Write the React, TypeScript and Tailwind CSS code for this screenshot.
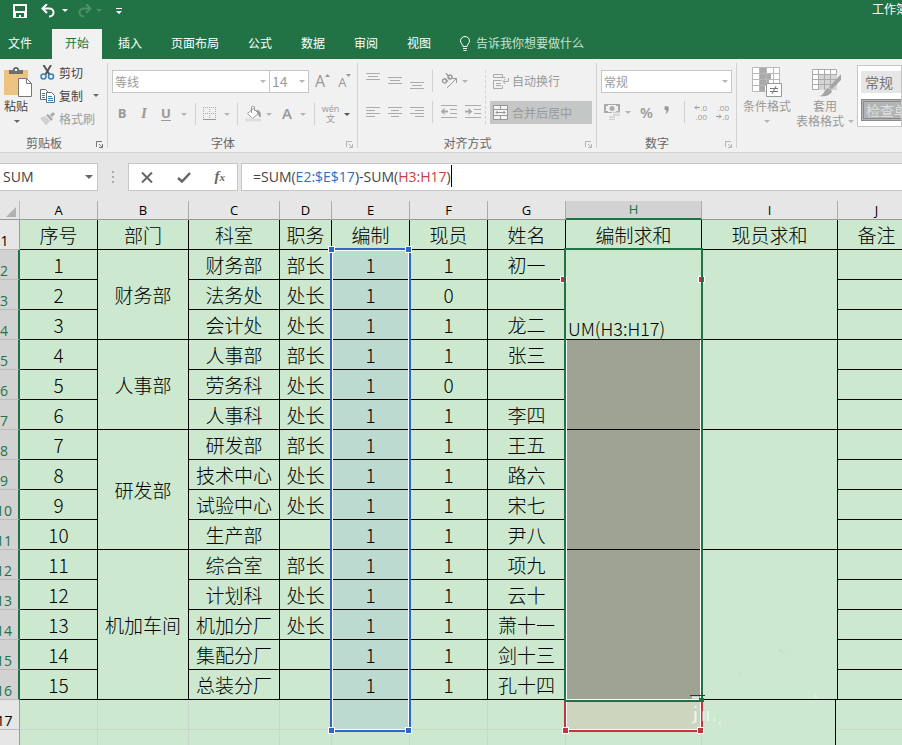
import { ReactNode } from 'react';

type SheetRow = {
  dept?: string;
  span?: number;
  office: string;
  title: string;
  quota: string;
  staff: string;
  name: string;
};

const ROWS: SheetRow[] = [
  { dept: '财务部', span: 3, office: '财务部', title: '部长', quota: '1', staff: '1', name: '初一' },
  { office: '法务处', title: '处长', quota: '1', staff: '0', name: '' },
  { office: '会计处', title: '处长', quota: '1', staff: '1', name: '龙二' },
  { dept: '人事部', span: 3, office: '人事部', title: '部长', quota: '1', staff: '1', name: '张三' },
  { office: '劳务科', title: '处长', quota: '1', staff: '0', name: '' },
  { office: '人事科', title: '处长', quota: '1', staff: '1', name: '李四' },
  { dept: '研发部', span: 4, office: '研发部', title: '部长', quota: '1', staff: '1', name: '王五' },
  { office: '技术中心', title: '处长', quota: '1', staff: '1', name: '路六' },
  { office: '试验中心', title: '处长', quota: '1', staff: '1', name: '宋七' },
  { office: '生产部', title: '', quota: '1', staff: '1', name: '尹八' },
  { dept: '机加车间', span: 5, office: '综合室', title: '部长', quota: '1', staff: '1', name: '项九' },
  { office: '计划科', title: '处长', quota: '1', staff: '1', name: '云十' },
  { office: '机加分厂', title: '处长', quota: '1', staff: '1', name: '萧十一' },
  { office: '集配分厂', title: '', quota: '1', staff: '1', name: '剑十三' },
  { office: '总装分厂', title: '', quota: '1', staff: '1', name: '孔十四' },
];

const COLUMNS = ['A', 'B', 'C', 'D', 'E', 'F', 'G', 'H', 'I', 'J'];
const HEADINGS = ['序号', '部门', '科室', '职务', '编制', '现员', '姓名', '编制求和', '现员求和', '备注'];
const TABS = ['插入', '页面布局', '公式', '数据', '审阅', '视图'];

const Arrow = ({ className = 'text-[#b5b5b5]' }: { className?: string }) => (
  <svg width="6" height="3" viewBox="0 0 6 3" className={`shrink-0 ${className}`} aria-hidden="true">
    <path d="M0 0h6L3 3z" fill="currentColor" />
  </svg>
);

const Divider = ({ className = 'h-[22px]' }: { className?: string }) => (
  <div className={`w-px shrink-0 bg-[#d2d2d2] ${className}`} />
);

const Launcher = ({ className = 'text-[#b5b5b5]' }: { className?: string }) => (
  <button aria-label="更多设置" className={`absolute right-[5px] bottom-1 ${className}`}>
    <svg width="7" height="7" viewBox="0 0 7 7" fill="none" stroke="currentColor">
      <path d="M.5 6V.5H6M3 3l3 3M6.500 3v3.500H3" />
    </svg>
  </button>
);

const Group = ({
  label,
  className,
  launcher,
  children,
}: {
  label: string;
  className: string;
  launcher?: string;
  children: ReactNode;
}) => (
  <section className={`relative flex shrink-0 flex-col ${className}`}>
    <div className="flex-1">{children}</div>
    <h2 className="h-[18px] pr-5 text-center leading-[17px] text-[#666]">{label}</h2>
    <Launcher className={launcher} />
    <div className="absolute top-1 right-0 bottom-1 w-px bg-[#d2d2d2]" />
  </section>
);

const Combo = ({ label, value, className }: { label: string; value: string; className: string }) => (
  <div className={`relative h-[23px] shrink-0 ${className}`}>
    <select
      aria-label={label}
      className="size-full appearance-none border border-[#c6c6c6] bg-white px-[2px] text-[#9c9c9c] outline-none"
    >
      <option>{value}</option>
    </select>
    <Arrow className="pointer-events-none absolute top-[10px] right-1 text-[#b5b5b5]" />
  </div>
);

const LINES: Record<string, number[][]> = {
  top: [[0, 14, 0], [2, 12, 3], [0, 14, 6]],
  middle: [[0, 14, 4], [2, 12, 7], [0, 14, 10]],
  bottom: [[0, 14, 9], [2, 12, 12], [0, 14, 15]],
  left: [[0, 14, 3], [0, 9, 6], [0, 14, 9], [0, 9, 12]],
  center: [[0, 14, 3], [3, 11, 6], [0, 14, 9], [3, 11, 12]],
  right: [[0, 14, 3], [5, 14, 6], [0, 14, 9], [5, 14, 12]],
};

const AlignButton = ({ kind, label }: { kind: string; label: string }) => (
  <button aria-label={label}>
    <svg width="14" height="16" viewBox="0 0 14 16" stroke="#ababab">
      {LINES[kind].map(([from, to, y]) => (
        <path key={y} d={`M${from} ${y + 0.5}H${to}`} />
      ))}
    </svg>
  </button>
);

const IndentButton = ({ label, flip }: { label: string; flip?: boolean }) => (
  <button aria-label={label}>
    <svg width="16" height="14" viewBox="0 0 16 14" stroke="#ababab">
      <path d="M0 .5h16M9 4.500h7M9 8.500h7M0 12.500h16" />
      <path d={flip ? 'M0 6.500h5' : 'M7 6.500H2'} strokeWidth="2" />
      <path d={flip ? 'M3.500 3v7l4-3.500z' : 'M3.500 3v7l-4-3.500z'} fill="#ababab" stroke="none" />
    </svg>
  </button>
);

const Header = () => (
  <header className="shrink-0 overflow-hidden bg-[#217346] text-white">
    <div className="flex h-[29px] items-start pt-1 pl-[13px]">
      <button aria-label="保存">
        <svg width="14" height="14" viewBox="0 0 14 14">
          <path d="M0 0h14v14H0z" fill="#fff" />
          <path d="M2 2h10v5H2zM3 9h8v4H8v-2H6v2H3z" fill="#217346" />
        </svg>
      </button>
      <button aria-label="撤消" className="ml-[14px]">
        <svg width="15" height="14" viewBox="0 0 15 14" fill="none" stroke="#fff" strokeWidth="2">
          <path d="M6 0L1.500 4.500 6 9M2 4.500h6.500a4 4 0 0 1 0 8H8" />
        </svg>
      </button>
      <Arrow className="mt-[5px] ml-[6px] text-white" />
      <button aria-label="恢复" className="ml-[9px]">
        <svg width="15" height="14" viewBox="0 0 15 14" fill="none" stroke="#4c9069" strokeWidth="2">
          <path d="M9 0l4.500 4.500L9 9M13 4.500H6.500a4 4 0 0 0 0 8H7" />
        </svg>
      </button>
      <Arrow className="mt-[5px] ml-1 text-[#4c9069]" />
      <button aria-label="自定义快速访问工具栏" className="mt-1 ml-[14px]">
        <svg width="6" height="6" viewBox="0 0 6 6" fill="#fff">
          <path d="M0 0h6v1H0zM0 3h6L3 6z" />
        </svg>
      </button>
      <h1 className="-mt-1 ml-auto w-[30px] overflow-hidden whitespace-nowrap">工作簿1 - Excel</h1>
    </div>
    <nav className="flex h-[30px] items-stretch">
      <button className="w-[52px] pr-3 pb-[2px]">文件</button>
      <button className="bg-[#f1f1f1] px-[13px] pb-[2px] text-[#217346]">开始</button>
      {TABS.map((tab) => (
        <button key={tab} className="ml-[3px] px-[13px] pb-[2px] whitespace-nowrap">
          {tab}
        </button>
      ))}
      <button className="ml-4 flex items-center gap-[6px] pb-[2px] whitespace-nowrap text-[#c9e2d3]">
        <svg width="10" height="15" viewBox="0 0 10 15" fill="none" stroke="#fff">
          <path d="M3 10.500C3 8.500.500 7.500.500 4.800a4.500 4.300 0 0 1 9 0C9.500 7.500 7 8.500 7 10.500zM3 12.500h4M3.500 14.500h3" />
        </svg>
        告诉我你想要做什么
      </button>
    </nav>
  </header>
);

const ClipboardGroup = () => (
  <Group label="剪贴板" className="w-[108px]" launcher="text-[#777]">
    <div className="flex">
      <button className="mt-2 flex w-8 flex-col items-center pl-1">
        <svg width="28" height="30" viewBox="0 0 28 30">
          <path d="M0 3h24v25H0z" fill="#eec382" />
          <path d="M5 7V3h4V1.500L11 0h2l2 1.500V3h4v4z" fill="#6f6f6f" />
          <path d="M11 2h2v2h-2z" fill="#fff" />
          <path d="M14.500 11.500h8l5 5v13h-13z" fill="#fff" stroke="#777" />
          <path d="M22.500 11.500v5h5" fill="none" stroke="#777" />
        </svg>
        <span className="pr-1 leading-[17px] text-[#444]">粘贴</span>
        <Arrow className="mt-[6px] mr-[2px] text-[#666]" />
      </button>
      <div className="mt-[2px] ml-2 flex flex-col text-[#444]">
        <button className="flex h-[23px] items-center gap-1">
          <svg width="15" height="15" viewBox="0 0 15 15" fill="none">
            <path d="M3.500 0l6 9.500M11 0L5.500 9.500" stroke="#555" strokeWidth="2" />
            <circle cx="3.500" cy="11.500" r="2.500" stroke="#2e83bd" strokeWidth="1.500" />
            <circle cx="11" cy="11.500" r="2.500" stroke="#2e83bd" strokeWidth="1.500" />
          </svg>
          剪切
        </button>
        <button className="flex h-[23px] items-center gap-1">
          <svg width="15" height="14" viewBox="0 0 15 14" fill="#fff" stroke="#6a6a6a">
            <path d="M.5.5h5l2 2v8h-7z" />
            <path d="M2 4.500h3M2 6.500h3M2 8.500h3" stroke="#2e83bd" />
            <path d="M6.500 3.500h5l3 3v7h-8z" />
            <path d="M8 7.500h4M8 9.500h5M8 11.500h5" stroke="#2e83bd" />
          </svg>
          复制
          <Arrow className="ml-[6px] text-[#666]" />
        </button>
        <button className="flex h-[23px] items-center gap-1 text-[#9c9c9c]">
          <svg width="15" height="14" viewBox="0 0 15 14">
            <path d="M0 6l5-2 5 5-4 4.500z" fill="#cfcfcf" />
            <path d="M6 3l2-1 5 5-2 2zM10 3l3-3 2 2-3 3z" fill="#aaa" />
          </svg>
          格式刷
        </button>
      </div>
    </div>
  </Group>
);

const FontGroup = () => (
  <Group label="字体" className="w-[250px]">
    <div className="flex pt-[11px] pl-1">
      <Combo label="字体" value="等线" className="w-[158px]" />
      <Combo label="字号" value="14" className="-ml-px w-10 text-[14px]" />
      <button aria-label="增大字号" className="ml-[6px] flex font-['Open_Sans',sans-serif] text-[16px] leading-[23px] text-[#999]">
        A
        <svg width="5" height="3" viewBox="0 0 5 3" className="mt-1" fill="#999">
          <path d="M0 3h5L2.500 0z" />
        </svg>
      </button>
      <button aria-label="减小字号" className="ml-2 flex font-['Open_Sans',sans-serif] text-[13px] leading-[25px] text-[#999]">
        A
        <svg width="5" height="3" viewBox="0 0 5 3" className="mt-1" fill="#999">
          <path d="M0 0h5L2.500 3z" />
        </svg>
      </button>
    </div>
    <div className="mt-2 flex h-[22px] items-center pl-1 font-['Open_Sans',sans-serif] text-[13px] leading-[18px] text-[#999]">
      <button aria-label="加粗" className="w-5 pb-[2px] text-center font-bold">B</button>
      <button aria-label="倾斜" className="ml-[2px] w-5 pb-[2px] text-center font-['Liberation_Serif',serif] text-[15px] font-bold italic">I</button>
      <button aria-label="下划线" className="ml-[2px] w-5 pb-[2px] text-center font-bold underline underline-offset-2">U</button>
      <Arrow className="ml-[5px] text-[#b5b5b5]" />
      <Divider className="ml-[8px] h-[22px]" />
      <button aria-label="边框" className="ml-[7px]">
        <svg width="13" height="14" viewBox="0 0 13 14" fill="none" stroke="#aaa">
          <path d="M0 .5h13M0 6.500h13M.5 0v12M6.500 0v12M12.500 0v12" strokeDasharray="1 1" />
          <path d="M0 12.500h13" stroke="#999" />
        </svg>
      </button>
      <Arrow className="ml-[8px] text-[#b5b5b5]" />
      <Divider className="ml-[7px] h-[22px]" />
      <button aria-label="填充颜色" className="ml-[7px]">
        <svg width="17" height="16" viewBox="0 0 17 16" fill="none" stroke="#999">
          <path d="M2.500 7.500l6-5 5 5-6 5z" fill="#fff" />
          <path d="M6.500 7V1.500a1.500 1.500 0 0 1 3 0V5" />
          <path d="M12 4c3 1 4 4 3 7-1-1-1-3-2.500-4z" fill="#999" />
          <path d="M0 14h16" strokeWidth="3" stroke="#dedede" />
        </svg>
      </button>
      <Arrow className="ml-[4px] text-[#b5b5b5]" />
      <button aria-label="字体颜色" className="ml-[9px] w-[12px] pb-[2px] text-[15px] font-semibold">A</button>
      <Arrow className="ml-[7px] text-[#b5b5b5]" />
      <Divider className="ml-[8px] h-[22px]" />
      <button aria-label="拼音指南" className="ml-[6px] flex w-[19px] flex-col items-center font-['Open_Sans','Noto_Sans_CJK_SC',sans-serif] text-[9px] leading-[10px]">
        <span>wén</span>
        <span>文</span>
      </button>
      <Arrow className="ml-[4px] text-[#555]" />
    </div>
  </Group>
);

const AlignGroup = () => (
  <Group label="对齐方式" className="w-[239px]">
    <div className="flex pt-[11px] pl-2">
      <div>
        <div className="flex h-[22px] items-center gap-2">
          <AlignButton kind="top" label="顶端对齐" />
          <AlignButton kind="middle" label="垂直居中" />
          <AlignButton kind="bottom" label="底端对齐" />
          <Divider />
          <button aria-label="方向" className="flex items-center gap-1">
            <svg width="17" height="16" viewBox="0 0 17 16" fill="none" stroke="#999">
              <g strokeWidth="1.300">
                <circle cx="3.500" cy="8" r="2" />
                <path d="M4 5.500l3 3" />
                <circle cx="9" cy="4" r="2" />
                <path d="M5 0l3.500 5" />
              </g>
              <path d="M6 15l9-9M11 5.500h4.500V10" />
            </svg>
            <Arrow />
          </button>
        </div>
        <div className="mt-[9px] flex h-[22px] items-center gap-2">
          <AlignButton kind="left" label="左对齐" />
          <AlignButton kind="center" label="居中" />
          <AlignButton kind="right" label="右对齐" />
          <Divider />
          <IndentButton label="减少缩进量" />
          <IndentButton label="增加缩进量" flip />
        </div>
      </div>
      <div className="ml-1 h-[54px] border-l border-dashed border-[#d2d2d2]" />
      <div className="ml-1 text-[#999]">
        <button className="flex h-[22px] items-center gap-[3px] pl-[3px]">
          <svg width="16" height="16" viewBox="0 0 16 16" fill="none" stroke="#aaa">
            <path d="M.5 1.500h9v3h-9zM.5 15.500v-8h8M3 10.500h5M3 12.500h5M.5 15.500h9v-3M9.500 4.500h3M15.500 5v3.500h-5M12.500 6l-2.500 2.500 2.500 2.500" />
          </svg>
          自动换行
        </button>
        <button className="mt-[9px] flex h-[23px] w-[102px] items-center gap-[4px] bg-[#c5c7c6] pl-[3px]">
          <svg width="15" height="15" viewBox="0 0 15 15" stroke="#969696">
            <path d="M.5.5h14v14H.5z" fill="#f4f4f4" />
            <path d="M0 4.500h15M0 10.500h15M7.500 0v4.500M7.500 10.500V15M3 7.500h9M4.500 6L3 7.500 4.500 9M10.500 6L12 7.500 10.500 9" fill="none" />
          </svg>
          合并后居中
        </button>
      </div>
    </div>
  </Group>
);

const NumberGroup = () => (
  <Group label="数字" className="w-[140px]">
    <div className="pt-[11px] pl-1">
      <Combo label="数字格式" value="常规" className="w-[131px]" />
    </div>
    <div className="mt-2 flex h-[22px] items-center pl-[7px] font-['Open_Sans',sans-serif] text-[#999]">
      <button aria-label="会计数字格式">
        <svg width="16" height="16" viewBox="0 0 16 16">
          <path d="M.5.5h15v8H.5z" fill="#f1f1f1" stroke="#aaa" />
          <path d="M0 0h4v2H2v5h2v2H0zM16 0h-4v2h2v5h-2v2h4z" fill="#aaa" />
          <circle cx="8" cy="4.500" r="2.500" fill="#aaa" />
          <path d="M8 8h8v2H8z" fill="#f1f1f1" />
          <path d="M9 8.500h7M9 11h7M5 13h6M5 15.500h6" stroke="#cfcfcf" strokeWidth="1.500" />
        </svg>
      </button>
      <Arrow className="ml-[5px] text-[#b5b5b5]" />
      <button aria-label="百分比样式" className="ml-[8px] w-[15px] text-[15px] font-semibold">%</button>
      <button aria-label="千位分隔样式" className="ml-[10px] w-[7px] pb-1">
        <svg width="6" height="8" viewBox="0 0 6 9" fill="#999">
          <path d="M0 2.500a2.500 2.500 0 0 1 5 0C5 5.500 4 8 1 9c1-1.500 1.500-2.500 1.500-4A2.500 2.500 0 0 1 0 2.500z" />
        </svg>
      </button>
      <Divider className="ml-[13px] h-[22px]" />
      <button aria-label="增加小数位数" className="ml-[7px] flex w-[15px] flex-col items-end text-[8px] leading-[9px]">
        <span className="flex items-center">
          <svg width="6" height="5" viewBox="0 0 6 5" fill="none" stroke="#999">
            <path d="M6 2.500H1M3 .5l-2 2 2 2" />
          </svg>
          .0
        </span>
        <span>.00</span>
      </button>
      <button aria-label="减少小数位数" className="ml-[7px] flex w-[15px] flex-col items-end text-[8px] leading-[9px]">
        <span>.00</span>
        <span className="flex items-center">
          <svg width="6" height="5" viewBox="0 0 6 5" fill="none" stroke="#999">
            <path d="M0 2.500h5M3 .5l2 2-2 2" />
          </svg>
          .0
        </span>
      </button>
    </div>
  </Group>
);

const StylesGroup = () => (
  <section className="flex min-w-0 flex-1 overflow-hidden text-[#999]">
    <button className="mt-2 ml-[6px] flex shrink-0 flex-col items-center self-start">
      <svg width="30" height="30" viewBox="0 0 30 30">
        <path d="M0 0h28v25H0z" fill="#fff" />
        <path d="M8 0h6v6H8zM8 6h11v6H8zM8 12h9v6H8zM8 18h5v7H8z" fill="#aaa" />
        <path d="M.5.5h27v24H.5zM0 6.500h28M0 12.500h28M0 18.500h28M7.500 0v25M14.500 0v25M21.500 0v25" fill="none" stroke="#b8b8b8" />
        <path d="M14.500 16.500h15v13h-15z" fill="#fff" stroke="#999" />
        <path d="M18 21.500h8M18 24.500h8M24 19l-4 8" stroke="#777" />
      </svg>
      <span className="leading-[17px]">条件格式</span>
      <Arrow className="mt-[6px] text-[#b5b5b5]" />
    </button>
    <button className="mt-[10px] ml-[5px] shrink-0 self-start">
      <svg width="30" height="28" viewBox="0 0 30 28" className="ml-4">
        <path d="M.5.5h24v20H.5z" fill="#fff" stroke="#aaa" />
        <path d="M7 6h18v15H7z" fill="#d5d5d5" />
        <path d="M0 5.500h25M0 10.500h25M0 15.500h25M6.500 0v21M12.500 0v21M18.500 0v21" stroke="#aaa" />
        <path d="M29 5v6l-9 9-3-2z" fill="#a5a5a5" />
        <path d="M7 27c5 0 5-7 9-8l4 3c-1 4-6 6-13 5z" fill="#a5a5a5" />
      </svg>
      <span className="block leading-[17px]">套用</span>
      <span className="flex items-center gap-1 leading-[14px]">
        表格格式
        <Arrow />
      </span>
    </button>
    <div className="mt-[6px] ml-[3px] h-[62px] flex-1 overflow-hidden border border-[#c6c6c6] bg-white py-[5px] pl-[3px] text-[14px] whitespace-nowrap">
      <button className="block h-[22px] w-[92px] bg-[#e6e6e6] pl-1 text-left leading-[20px] text-[#777]">常规</button>
      <button className="mt-[6px] block h-[22px] w-[92px] border-3 border-double border-[#8a8a8a] bg-[#b4b4b4] pl-[2px] text-left leading-[14px] text-[#dedede]">
        检查单元格
      </button>
    </div>
  </section>
);

const FormulaBar = () => (
  <div className="flex h-12 shrink-0 items-center font-['Open_Sans','Noto_Sans_CJK_SC',sans-serif] text-[14px] text-[#444]">
    <div className="relative h-7 w-[98px] shrink-0 border border-l-0 border-[#c6c6c6] bg-white">
      <input aria-label="名称框" defaultValue="SUM" className="size-full pb-[2px] pl-[3px] outline-none" />
      <svg width="8" height="4" viewBox="0 0 8 4" className="pointer-events-none absolute top-[11px] right-1" fill="#666">
        <path d="M0 0h8L4 4z" />
      </svg>
    </div>
    <svg width="2" height="12" viewBox="0 0 2 12" className="mx-[14px] shrink-0" fill="#aaa">
      <path d="M0 0h2v2H0zM0 5h2v2H0zM0 10h2v2H0z" />
    </svg>
    <div className="flex h-7 w-[110px] shrink-0 items-center justify-between border border-[#c6c6c6] bg-white px-3">
      <button aria-label="取消">
        <svg width="12" height="11" viewBox="0 0 12 11" stroke="#666" strokeWidth="2">
          <path d="M1 .5l10 10M11 .5l-10 10" />
        </svg>
      </button>
      <button aria-label="输入">
        <svg width="14" height="11" viewBox="0 0 14 11" fill="none" stroke="#666" strokeWidth="2.500">
          <path d="M1 6l4 3.500L13 1" />
        </svg>
      </button>
      <button aria-label="插入函数" className="pb-[2px] font-['Liberation_Serif',serif] text-[15px] font-bold italic text-[#666]">
        f<span className="text-[11px]">x</span>
      </button>
    </div>
    <div className="relative ml-[3px] h-7 min-w-0 flex-1 border border-r-0 border-[#c6c6c6] bg-white">
      <div className="pointer-events-none absolute inset-0 flex items-center pb-[2px] pl-[11px] whitespace-pre" aria-hidden="true">
        =SUM(<span className="text-[#2f6fc0]">E2:$E$17</span>)-SUM(<span className="text-[#c5413f]">H3:H17</span>)
        <span className="h-[22px] w-px bg-black" />
      </div>
      <input
        aria-label="编辑栏"
        defaultValue="=SUM(E2:$E$17)-SUM(H3:H17)"
        className="size-full bg-transparent pb-[2px] pl-[11px] text-transparent outline-none"
      />
    </div>
  </div>
);

const Handle = ({ className }: { className: string }) => (
  <span className={`absolute size-[7px] border border-white ${className}`} />
);

const CELL = 'border-r border-b border-black p-0 pt-px';
const GRID = 'border-r border-b border-[#cdd3ce] p-0';

const Sheet = () => (
  <main className="relative min-h-0 flex-1 overflow-hidden bg-[#cce8cf]">
    <table className="-ml-[10px] w-[926px] table-fixed border-separate border-spacing-0 text-center text-[19px] leading-[24px] font-light text-black">
      <colgroup>
        <col className="w-[30px]" />
        <col className="w-[78px]" />
        <col className="w-[91px]" />
        <col className="w-[91px]" />
        <col className="w-[52px]" />
        <col className="w-[78px]" />
        <col className="w-[78px]" />
        <col className="w-[78px]" />
        <col className="w-[136px]" />
        <col className="w-[136px]" />
        <col className="w-[78px]" />
      </colgroup>
      <thead>
        <tr className="h-[19px] bg-[#e6e6e6] font-['Open_Sans',sans-serif] text-[13px] leading-[17px]">
          <th className="border-r border-b border-r-[#bbb] border-b-[#999] p-0">
            <svg width="10" height="10" viewBox="0 0 10 10" className="mt-1 mr-[3px] ml-auto" fill="#b1b1b1">
              <path d="M10 0v10H0z" />
            </svg>
          </th>
          {COLUMNS.map((col) => (
            <th
              key={col}
              className={
                col === 'H'
                  ? 'border-r border-b-2 border-r-[#ababab] border-b-[#217346] bg-[#d2d2d2] p-0 font-normal text-[#217346]'
                  : 'border-r border-b border-r-[#ababab] border-b-[#999] p-0 font-normal'
              }
            >
              {col}
            </th>
          ))}
        </tr>
      </thead>
      <tbody>
        <tr className="h-[30px]">
          <RowLabel n={1} />
          {HEADINGS.map((text) => (
            <td key={text} className={CELL}>{text}</td>
          ))}
        </tr>
        {ROWS.map((row, i) => (
          <tr key={i} className="h-[30px]">
            <RowLabel n={i + 2} active />
            <td className={CELL}>{i + 1}</td>
            {row.dept && <td rowSpan={row.span} className={CELL}>{row.dept}</td>}
            <td className={CELL}>{row.office}</td>
            <td className={CELL}>{row.title}</td>
            <td className={`${CELL} bg-[#bcdad0]`}>{row.quota}</td>
            <td className={CELL}>{row.staff}</td>
            <td className={CELL}>{row.name}</td>
            {row.dept && (
              <>
                {i === 0 ? (
                  <td rowSpan={row.span} className="border-r border-b border-black p-0 pl-[2px] text-left align-bottom text-[18px] leading-[22px]">
                    UM(H3:H17)
                  </td>
                ) : (
                  <td rowSpan={row.span} className={`${CELL} bg-[#9ea393]`} />
                )}
                <td rowSpan={row.span} className={CELL} />
              </>
            )}
            <td className={CELL} />
          </tr>
        ))}
        <tr className="h-[30px]">
          <RowLabel n={17} />
          {COLUMNS.map((col) => (
            <td
              key={col}
              className={col === 'E' ? `${GRID} bg-[#bcdad0]` : col === 'H' ? `${GRID} bg-[#cdd5be]` : col === 'I' ? 'p-0' : GRID}
            />
          ))}
        </tr>
        <tr className="h-[30px]">
          <RowLabel n={18} />
          {COLUMNS.map((col) => (
            <td key={col} className={col === 'I' ? 'p-0' : GRID} />
          ))}
        </tr>
      </tbody>
    </table>

    {/* referenced and selected ranges */}
    <div className="pointer-events-none absolute top-[499px] left-[564px] h-[32px] w-[139px] border-2 border-t-0 border-[#c2353f]">
      <div className="size-full border border-t-0 border-white" />
      <Handle className="-bottom-[4px] -left-[4px] bg-[#c2353f]" />
      <Handle className="-right-[3px] -bottom-[4px] bg-[#c2353f]" />
    </div>
    <Handle className="top-[75px] left-[560px] bg-[#c2353f]" />
    <Handle className="top-[75px] left-[698px] bg-[#c2353f]" />
    <div className="pointer-events-none absolute top-[47px] left-[564px] flex h-[454px] w-[139px] flex-col justify-end border-2 border-[#217346]">
      <div className="h-[360px] border border-t-0 border-white" />
    </div>
    <div className="pointer-events-none absolute top-[47px] left-[330px] h-[484px] w-[81px] border-2 border-[#2f66c8]">
      <div className="size-full border border-white" />
      <Handle className="-top-[4px] -left-[4px] bg-[#2f66c8]" />
      <Handle className="-top-[4px] -right-[3px] bg-[#2f66c8]" />
      <Handle className="-bottom-[4px] -left-[4px] bg-[#2f66c8]" />
      <Handle className="-right-[3px] -bottom-[4px] bg-[#2f66c8]" />
    </div>
    <div className="absolute top-[499px] bottom-0 left-[835px] w-px bg-black" />

    <svg width="136" height="80" viewBox="0 0 136 80" className="pointer-events-none absolute top-[447px] left-[688px]" fill="none" aria-hidden="true">
      <path d="M90 2l4 1 3 2M50 27l3-3" stroke="#bfd8c0" />
      <path d="M2 47.500h15" stroke="#333" />
      <path d="M4 49.500h7" stroke="#eee" strokeWidth="2" />
      <path d="M11 50h5v4h-5z" fill="#217346" />
      <path d="M7.500 58v2M7.500 63v10l-3 2" stroke="#eef4ee" strokeWidth="2" />
      <path d="M15.500 63v10M20 63v10" stroke="#e8f3f0" strokeWidth="2" />
      <path d="M25 70l3 2-3 1M33 73l-2 2 2 2M127 47l2 3h-2z" stroke="#e8f1ea" />
    </svg>
  </main>
);

const RowLabel = ({ n, active }: { n: number; active?: boolean }) => (
  <th
    scope="row"
    className={`border-b border-b-[#bbb] p-0 align-bottom font-['Open_Sans',sans-serif] text-[14px] leading-[16px] font-normal ${
      active ? 'border-r-2 border-r-[#217346] bg-[#d2d2d2] text-[#217346]' : 'border-r border-r-[#999] bg-[#e6e6e6]'
    }`}
  >
    {n}
  </th>
);

const App = () => (
  <div className="flex h-screen flex-col overflow-hidden bg-[#e6e6e6] font-['Noto_Sans_CJK_SC',sans-serif] text-[12px]">
    <Header />
    <div className="flex h-[94px] shrink-0 overflow-hidden border-b border-[#d2d2d2] bg-[#f1f1f1]">
      <ClipboardGroup />
      <FontGroup />
      <AlignGroup />
      <NumberGroup />
      <StylesGroup />
    </div>
    <FormulaBar />
    <Sheet />
  </div>
);

export default App;
